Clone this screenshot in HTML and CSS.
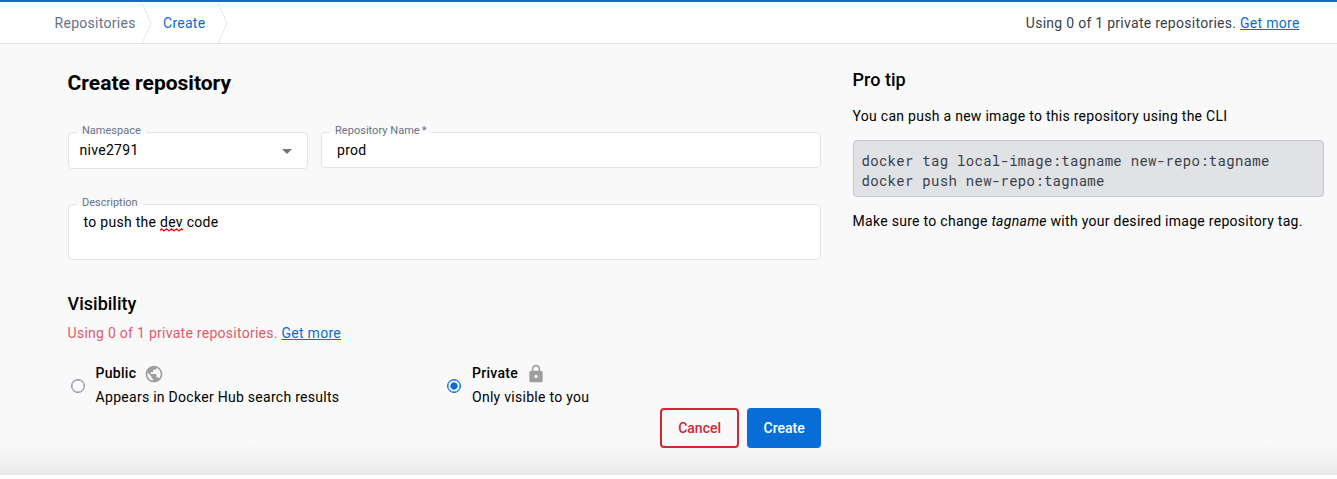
FILE: index.html
```html
<!DOCTYPE html>
<html lang="en">
<head>
<meta charset="utf-8">
<title>Create repository</title>
<link rel="stylesheet" href="styles.css">
</head>
<body>
<header class="topbar">
  <nav class="crumbs">
    <span class="crumb">Repositories</span>
    <svg class="chevron" width="12" height="41" viewBox="0 0 12 41"><path d="M1 1L10 21L1 41" fill="none" stroke="#e6e8ea"/></svg>
    <span class="crumb crumb-current">Create</span>
    <svg class="chevron" width="12" height="41" viewBox="0 0 12 41"><path d="M1 1L10 21L1 41" fill="none" stroke="#e6e8ea"/></svg>
  </nav>
  <div class="usage">Using 0 of 1 private repositories. <a class="link" href="#">Get more</a></div>
</header>
<main class="page">
  <form class="form">
    <h1 class="title">Create repository</h1>
    <div class="row">
      <fieldset class="field namespace">
        <legend class="label">Namespace</legend>
        <span class="value">nive2791</span>
        <svg class="arrow" width="10" height="5" viewBox="0 0 10 5"><path d="M0 0h10L5 5z" fill="#757575"/></svg>
      </fieldset>
      <fieldset class="field reponame">
        <legend class="label">Repository Name<span class="star">*</span></legend>
        <span class="value">prod</span>
      </fieldset>
    </div>
    <fieldset class="field description">
      <legend class="label">Description</legend>
      <span class="value">to push the <span class="misspelt">dev<svg class="squiggle" width="23" height="4" viewBox="0 0 23 4"><path d="M0 2.5L1.5 .8L4 3L6.500 .8L9 3L11.500 .8L14 3L16.500 .8L19 3L21.500 .8L23 2" fill="none" stroke="#f00" stroke-width="1.2"/></svg></span> code</span>
    </fieldset>
    <h2 class="subtitle">Visibility</h2>
    <p class="quota">Using 0 of 1 private repositories. <a class="link" href="#">Get more</a></p>
    <div class="options">
      <label class="option">
        <span class="radio"></span>
        <span class="option-text">
          <span class="option-name">Public
            <svg class="icon" width="20" height="20" viewBox="0 0 24 24"><path fill="#9e9e9e" d="M12 2C6.480 2 2 6.480 2 12s4.480 10 10 10 10-4.480 10-10S17.520 2 12 2zm-1 17.930c-3.950-.490-7-3.850-7-7.930 0-.620.080-1.210.210-1.790L9 15v1c0 1.100.9 2 2 2v1.930zm6.900-2.540c-.260-.810-1-1.390-1.900-1.390h-1v-3c0-.550-.450-1-1-1H8v-2h2c.550 0 1-.450 1-1V7h2c1.100 0 2-.9 2-2v-.410c2.930 1.190 5 4.060 5 7.410 0 2.080-.8 3.970-2.100 5.390z"/></svg>
          </span>
          <span class="option-note">Appears in Docker Hub search results</span>
        </span>
      </label>
      <label class="option">
        <span class="radio radio-on"></span>
        <span class="option-text">
          <span class="option-name">Private
            <svg class="icon" width="20" height="20" viewBox="0 0 24 24"><path fill="#9e9e9e" d="M18 8h-1V6c0-2.760-2.240-5-5-5S7 3.240 7 6v2H6c-1.100 0-2 .9-2 2v10c0 1.100.9 2 2 2h12c1.100 0 2-.9 2-2V10c0-1.100-.9-2-2-2zm-6 9c-1.100 0-2-.9-2-2s.9-2 2-2 2 .9 2 2-.9 2-2 2zm3.100-9H8.900V6c0-1.710 1.390-3.100 3.100-3.100s3.100 1.390 3.100 3.100v2z"/></svg>
          </span>
          <span class="option-note">Only visible to you</span>
        </span>
      </label>
    </div>
    <div class="actions">
      <button type="button" class="btn cancel">Cancel</button>
      <button type="button" class="btn create">Create</button>
    </div>
  </form>
  <aside class="tip">
    <h2 class="tip-title">Pro tip</h2>
    <p class="tip-text">You can push a new image to this repository using the CLI</p>
    <pre class="code">docker tag local-image:tagname new-repo:tagname
docker push new-repo:tagname</pre>
    <p class="tip-text">Make sure to change <em>tagname</em> with your desired image repository tag.</p>
  </aside>
</main>
<footer class="footer"></footer>
</body>
</html>
```

FILE: styles.css
```css
* { box-sizing: border-box; }
body {
  margin: 0;
  height: 479px;
  overflow: hidden;
  display: flex;
  flex-direction: column;
  background: #f9f9f9;
  color: #000;
  font: 14px/20px Roboto, "Liberation Sans", sans-serif;
  letter-spacing: 0.28px;
}
h1, h2, p, pre { margin: 0; }
.topbar {
  height: 44px;
  flex: none;
  display: flex;
  justify-content: space-between;
  align-items: center;
  padding: 0 37.4px 0 54.6px;
  background: #fff;
  border-top: 2px solid #086dd7;
  border-bottom: 1px solid #e1e2e6;
}
.crumbs { display: flex; align-items: center; color: #677285; }
.crumb { width: 86.4px; }
.crumb-current { width: 54px; color: #086dd7; }
.chevron { flex: none; margin-right: 10px; }
.usage { color: #393f49; }
.link { color: #086dd7; text-decoration: underline; }
.page {
  flex: 1;
  display: flex;
  gap: 32px;
  padding: 0 13px 0 67.6px;
  background: linear-gradient(to top, #e8e8e9 0, #eeeeef 9px, #f4f4f4 18px, #f9f9f9 36px);
}
.form { width: 753px; flex: none; padding-top: 27px; }
.title { font-size: 21px; line-height: 24px; font-weight: 700; letter-spacing: 0; }
.row { display: flex; align-items: flex-start; gap: 13px; padding-top: 29px; }
.field {
  margin: 0;
  padding: 0 11px;
  min-width: 0;
  border: 1px solid #e1e2e6;
  border-radius: 4px;
  background: #fff;
  position: relative;
}
.label {
  height: 16px;
  margin-left: -2.6px;
  padding: 1px 5px 0;
  font-size: 11px;
  line-height: 12px;
  color: #677285;
  letter-spacing: 0;
}
.reponame .label { letter-spacing: 0.03px; }
.star { margin-left: 2px; }
.value { display: block; }
.namespace { width: 240px; height: 45px; }
.reponame { width: 500px; height: 44px; }
.reponame .value { padding-left: 4.4px; }
.arrow { position: absolute; right: 15px; top: 9px; }
.description { height: 64px; margin-top: 27px; }
.description .value { padding-left: 4px; }
.misspelt { position: relative; }
.squiggle { position: absolute; left: 0; bottom: -2px; }
.subtitle { margin-top: 32px; font-size: 18px; line-height: 24px; font-weight: 500; letter-spacing: 0; }
.quota { margin-top: 7px; color: #df5a6c; letter-spacing: 0.27px; }
.options { display: flex; margin-top: 20px; }
.option { width: 376.4px; flex: none; display: flex; align-items: center; }
.radio {
  width: 14px;
  height: 14px;
  margin: 2px 11px 0 3px;
  border: 1px solid #8993a5;
  box-shadow: inset 0 0 0 0.4px #8993a5;
  border-radius: 50%;
  background: #fcfcfc;
}
.radio-on {
  border-color: #086dd7;
  box-shadow: inset 0 0 0 0.4px #086dd7;
  background: radial-gradient(circle, #086dd7 3.2px, #fff 4px);
}
.option-text { display: flex; flex-direction: column; gap: 4px; }
.option-name { display: flex; height: 20px; align-items: center; gap: 7.6px; font-weight: 500; }
.icon { margin-top: 1px; }
.actions { display: flex; justify-content: flex-end; gap: 8px; margin-top: 1px; }
.btn {
  height: 40px;
  padding: 0 0 0 1px;
  border: 2px solid #086dd7;
  border-radius: 4px;
  font: 500 14px/20px Roboto, "Liberation Sans", sans-serif;
  letter-spacing: 0;
}
.cancel { width: 79px; border-color: #d52536; color: #d52536; background: transparent; }
.create { width: 74px; background: #086dd7; color: #fff; }
.tip { flex: 1; padding-top: 24px; }
.tip-title { font-size: 18px; line-height: 24px; font-weight: 500; letter-spacing: 0; }
.tip-text { margin: 14px 0; white-space: nowrap; }
.code {
  height: 57px;
  padding: 10px 8px;
  border: 1px solid #c4c8d1;
  border-radius: 4px;
  background: #e1e2e6;
  color: #393f49;
  font: 14px/20px "Roboto Mono", "DejaVu Sans Mono", monospace;
  letter-spacing: 0.28px;
}
.footer { height: 4px; flex: none; background: #fff; }
```
